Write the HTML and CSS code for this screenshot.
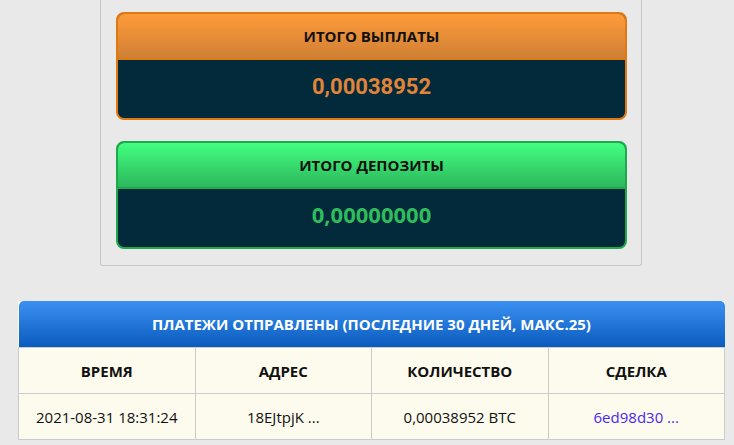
FILE: index.html
```html
<!DOCTYPE html>
<html lang="ru">

<head>
    <meta charset="UTF-8">
    <meta name="viewport" content="width=device-width, initial-scale=1.0">
    <link rel="stylesheet" href="styles.css">
    <title>Статистика</title>
</head>

<body>

    <div class="totals-panel">
        <div class="total-card payouts">
            <div class="total-head">ИТОГО ВЫПЛАТЫ</div>
            <div class="total-value">0,00038952</div>
        </div>
        <div class="total-card deposits">
            <div class="total-head">ИТОГО ДЕПОЗИТЫ</div>
            <div class="total-value">0,00000000</div>
        </div>
    </div>

    <table class="payments">
        <thead>
            <tr>
                <th colspan="4" class="payments-title">ПЛАТЕЖИ ОТПРАВЛЕНЫ (ПОСЛЕДНИЕ 30 ДНЕЙ, МАКС.25)</th>
            </tr>
            <tr>
                <th>ВРЕМЯ</th>
                <th>АДРЕС</th>
                <th>КОЛИЧЕСТВО</th>
                <th>СДЕЛКА</th>
            </tr>
        </thead>
        <tbody>
            <tr>
                <td>2021-08-31 18:31:24</td>
                <td>18EJtpjK ...</td>
                <td>0,00038952 BTC</td>
                <td><a href="#">6ed98d30 ...</a></td>
            </tr>
        </tbody>
    </table>

</body>

</html>
```

FILE: styles.css
```css
body {
    font-family: 'Open Sans', 'DejaVu Sans', sans-serif;
    background-color: #e9e9e9;
    margin: 0;
    padding: 0 10px 0 18px;
}

.totals-panel {
    width: 511px;
    margin-left: 82px;
    padding: 12px 14px 16px 15px;
    border: 1px solid #c6c6c6;
    border-top: none;
    border-radius: 0 0 3px 3px;
    display: flex;
    flex-direction: column;
    gap: 21px;
}

.total-card {
    border: 2px solid #df7a12;
    border-radius: 8px;
    overflow: hidden;
    background-color: #022a3b;
}

.total-head {
    height: 44px;
    line-height: 44px;
    text-align: center;
    font-size: 15px;
    font-weight: bold;
    color: #111;
    background: linear-gradient(#ff9b3a, #cf8035);
    border-bottom: 2px solid #df7a12;
}

.total-value {
    height: 58px;
    line-height: 54px;
    text-align: center;
    font-family: Roboto, 'Liberation Sans', sans-serif;
    font-size: 22px;
    font-weight: bold;
    color: #e0843a;
}

.deposits {
    border-color: #1fa84c;
}

.deposits .total-head {
    background: linear-gradient(#42ff80, #2cb75c);
    border-bottom-color: #1fa84c;
}

.deposits .total-value {
    font-family: 'Open Sans', sans-serif;
    line-height: 50px;
    color: #2fbd5c;
}

.payments {
    width: 707px;
    margin-top: 35px;
    border-collapse: collapse;
    table-layout: fixed;
    background-color: #fdfbee;
    font-size: 15px;
    color: #111;
}

.payments th,
.payments td {
    height: 45px;
    padding: 0;
    text-align: center;
    border: 1px solid #cccccc;
}

.payments th {
    font-weight: bold;
}

.payments .payments-title {
    height: 46px;
    color: #fff;
    border: none;
    border-radius: 5px 5px 0 0;
    background: linear-gradient(#3b91f2, #0a5bbd);
}

.payments a {
    color: #4a28ee;
    text-decoration: none;
}
```
